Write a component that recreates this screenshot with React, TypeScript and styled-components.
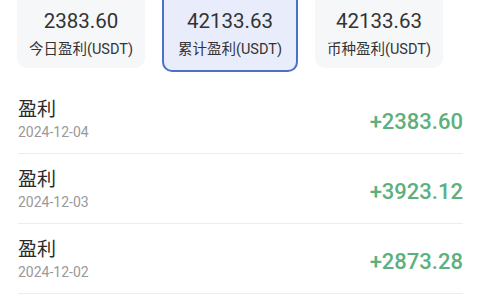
import React from 'react';
import styled, { createGlobalStyle, css } from 'styled-components';

type Stat = {
  value: string;
  label: string;
  active?: boolean;
};

type Record = {
  title: string;
  date: string;
  amount: string;
};

const stats: Stat[] = [
  { value: '2383.60', label: '今日盈利(USDT)' },
  { value: '42133.63', label: '累计盈利(USDT)', active: true },
  { value: '42133.63', label: '币种盈利(USDT)' },
];

const records: Record[] = [
  { title: '盈利', date: '2024-12-04', amount: '+2383.60' },
  { title: '盈利', date: '2024-12-03', amount: '+3923.12' },
  { title: '盈利', date: '2024-12-02', amount: '+2873.28' },
];

const GlobalStyle = createGlobalStyle`
  html, body {
    margin: 0;
    padding: 0;
    background: #ffffff;
    overflow: hidden;
  }
  body {
    font-family: Roboto, "Noto Sans CJK SC", sans-serif;
    color: #222;
  }
`;

export default function App() {
  return (
    <>
      <GlobalStyle />
      <Page>
        <StatRow>
          {stats.map((s) => (
            <StatCard key={s.label} active={!!s.active}>
              <StatValue>{s.value}</StatValue>
              <StatLabel>{s.label}</StatLabel>
            </StatCard>
          ))}
        </StatRow>
        <List>
          {records.map((r) => (
            <Row key={r.date}>
              <RowInfo>
                <RowTitle>{r.title}</RowTitle>
                <RowDate>{r.date}</RowDate>
              </RowInfo>
              <Amount>{r.amount}</Amount>
            </Row>
          ))}
        </List>
      </Page>
    </>
  );
}

const Page = styled.div`
  width: 480px;
  height: 300px;
  overflow: hidden;
`;

const StatRow = styled.div`
  display: flex;
  gap: 21px;
  padding-left: 17px;
  margin-top: -10px;
`;

const activeCard = css`
  margin: -4px;
  width: 136px;
  padding: 19.5px 0 10px;
  background: #e9edfb;
  border: 2px solid #4d70c6;
`;

const StatCard = styled.div<{ active: boolean }>`
  box-sizing: border-box;
  width: 128px;
  flex-shrink: 0;
  display: flex;
  flex-direction: column;
  align-items: center;
  padding: 17.5px 0 8px;
  border-radius: 10px;
  background: #f6f7f9;
  ${(p) => p.active && activeCard};
`;

const StatValue = styled.div`
  font-size: 20.5px;
  line-height: 26px;
  color: #333;
`;

const StatLabel = styled.div`
  margin-top: 6.5px;
  font-size: 14.5px;
  line-height: 20px;
  color: #333;
`;

const List = styled.div`
  margin: 16px 17px 0 18px;
`;

const Row = styled.div`
  display: flex;
  justify-content: space-between;
  padding: 14px 0 12px;
  border-bottom: 1px solid #ededed;
`;

const RowInfo = styled.div`
  display: flex;
  flex-direction: column;
  gap: 1px;
`;

const RowTitle = styled.div`
  font-size: 19px;
  line-height: 24px;
  color: #2a2a2a;
`;

const RowDate = styled.div`
  font-size: 14px;
  line-height: 18px;
  color: #999;
`;

const Amount = styled.div`
  align-self: center;
  margin-top: 4px;
  font-size: 22px;
  font-weight: 500;
  color: #5cb07d;
`;
